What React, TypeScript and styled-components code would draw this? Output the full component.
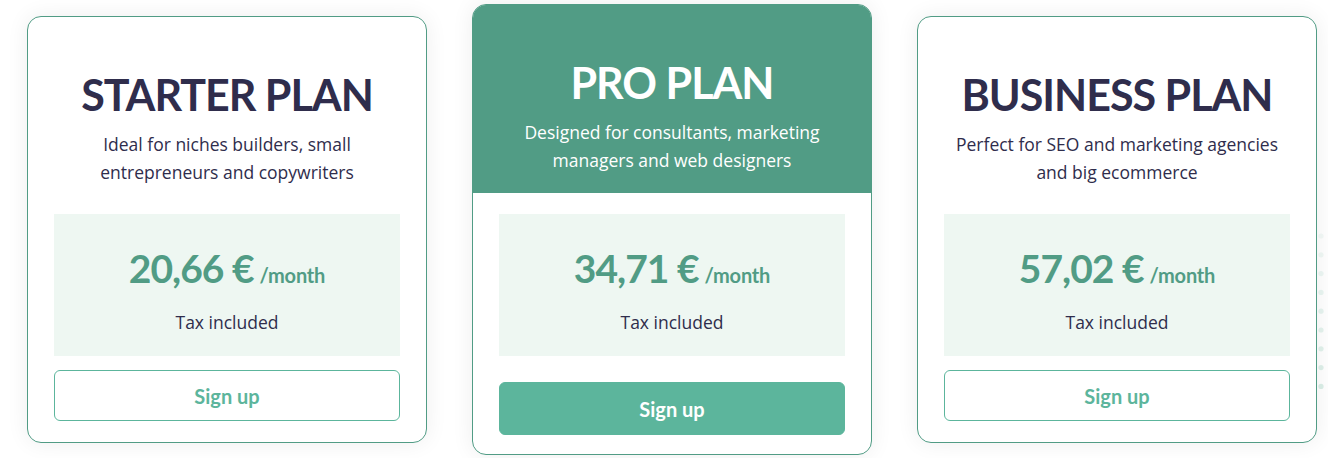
import React from 'react';
import styled, { createGlobalStyle } from 'styled-components';

const GlobalStyle = createGlobalStyle`
  html, body {
    margin: 0;
    padding: 0;
    background: #ffffff;
  }
  body {
    font-family: 'Open Sans', 'Liberation Sans', sans-serif;
    overflow: hidden;
  }
`;

type Plan = {
  name: string;
  description: string;
  price: string;
  featured?: boolean;
};

const plans: Plan[] = [
  {
    name: 'STARTER PLAN',
    description: 'Ideal for niches builders, small entrepreneurs and copywriters',
    price: '20,66 €',
  },
  {
    name: 'PRO PLAN',
    description: 'Designed for consultants, marketing managers and web designers',
    price: '34,71 €',
    featured: true,
  },
  {
    name: 'BUSINESS PLAN',
    description: 'Perfect for SEO and marketing agencies and big ecommerce',
    price: '57,02 €',
  },
];

const S = {
  Page: styled.div`
    position: relative;
    width: 1328px;
    height: 458px;
    box-sizing: border-box;
    padding: 4px 0 0 27px;
  `,
  Dots: styled.svg`
    position: absolute;
    right: -59px;
    top: 226px;
    z-index: 0;
  `,
  Row: styled.div`
    position: relative;
    z-index: 1;
    display: flex;
    align-items: center;
    gap: 45px;
    height: 451px;
  `,
  Card: styled.div<{ $featured?: boolean }>`
    width: 400px;
    box-sizing: border-box;
    display: flex;
    flex-direction: column;
    background: #ffffff;
    border: 1px solid #519c85;
    border-radius: 14px;
    overflow: hidden;
    box-shadow: 0 0 22px rgba(0, 0, 0, 0.07);
    padding-bottom: ${(p) => (p.$featured ? '19px' : '21px')};
  `,
  Header: styled.div<{ $featured?: boolean }>`
    box-sizing: border-box;
    height: ${(p) => (p.$featured ? '188px' : '197px')};
    padding: 52px 26px 0;
    text-align: center;
    background: ${(p) => (p.$featured ? '#519c85' : 'transparent')};
    color: ${(p) => (p.$featured ? '#ffffff' : '#2f2d4c')};
  `,
  Title: styled.h2`
    margin: 0;
    font-family: Lato, 'Liberation Sans', sans-serif;
    font-weight: 700;
    font-size: 43px;
    line-height: 52px;
    letter-spacing: -1px;
  `,
  Description: styled.p`
    margin: 9px 0 0;
    font-size: 17.5px;
    line-height: 28px;
    font-weight: 400;
  `,
  Body: styled.div<{ $featured?: boolean }>`
    display: flex;
    flex-direction: column;
    padding: ${(p) => (p.$featured ? '21px' : '0')} 26px 0;
    gap: ${(p) => (p.$featured ? '26px' : '14px')};
  `,
  PriceBox: styled.div`
    height: 142px;
    background: #eef7f2;
    display: flex;
    flex-direction: column;
    align-items: center;
    padding-top: 30px;
    box-sizing: border-box;
  `,
  PriceLine: styled.div`
    display: flex;
    align-items: baseline;
    gap: 6px;
    color: #519c85;
    font-family: Lato, 'Liberation Sans', sans-serif;
    font-weight: 700;
  `,
  Amount: styled.span`
    font-size: 39px;
    line-height: 48px;
    letter-spacing: -1px;
  `,
  Period: styled.span`
    font-size: 20px;
    letter-spacing: -0.2px;
  `,
  Tax: styled.div`
    margin-top: 18px;
    font-size: 17.5px;
    line-height: 24px;
    color: #2f2d4c;
  `,
  Button: styled.button<{ $featured?: boolean }>`
    height: ${(p) => (p.$featured ? '53px' : '51px')};
    width: 100%;
    border-radius: 6px;
    border: 1px solid #5cb59c;
    background: ${(p) => (p.$featured ? '#5cb59c' : '#ffffff')};
    color: ${(p) => (p.$featured ? '#ffffff' : '#5cb59c')};
    font-family: Lato, 'Liberation Sans', sans-serif;
    font-weight: 700;
    font-size: 20px;
    cursor: pointer;
  `,
};

function PlanCard({ plan }: { plan: Plan }) {
  return (
    <S.Card $featured={plan.featured}>
      <S.Header $featured={plan.featured}>
        <S.Title>{plan.name}</S.Title>
        <S.Description>{plan.description}</S.Description>
      </S.Header>
      <S.Body $featured={plan.featured}>
        <S.PriceBox>
          <S.PriceLine>
            <S.Amount>{plan.price}</S.Amount>
            <S.Period>/month</S.Period>
          </S.PriceLine>
          <S.Tax>Tax included</S.Tax>
        </S.PriceBox>
        <S.Button $featured={plan.featured}>Sign up</S.Button>
      </S.Body>
    </S.Card>
  );
}

export default function App() {
  const dots = [];
  for (let r = 0; r < 9; r++) {
    for (let c = 0; c < 4; c++) {
      dots.push(
        <circle key={`${r}-${c}`} cx={4 + c * 19} cy={10 + r * 18.8} r={2.6} opacity={0.25 + r * 0.06} />
      );
    }
  }

  return (
    <S.Page>
      <GlobalStyle />
      <S.Dots width="70" height="180" viewBox="0 0 70 180" fill="#cfe9e0">
        {dots}
      </S.Dots>
      <S.Row>
        {plans.map((plan) => (
          <PlanCard key={plan.name} plan={plan} />
        ))}
      </S.Row>
    </S.Page>
  );
}
